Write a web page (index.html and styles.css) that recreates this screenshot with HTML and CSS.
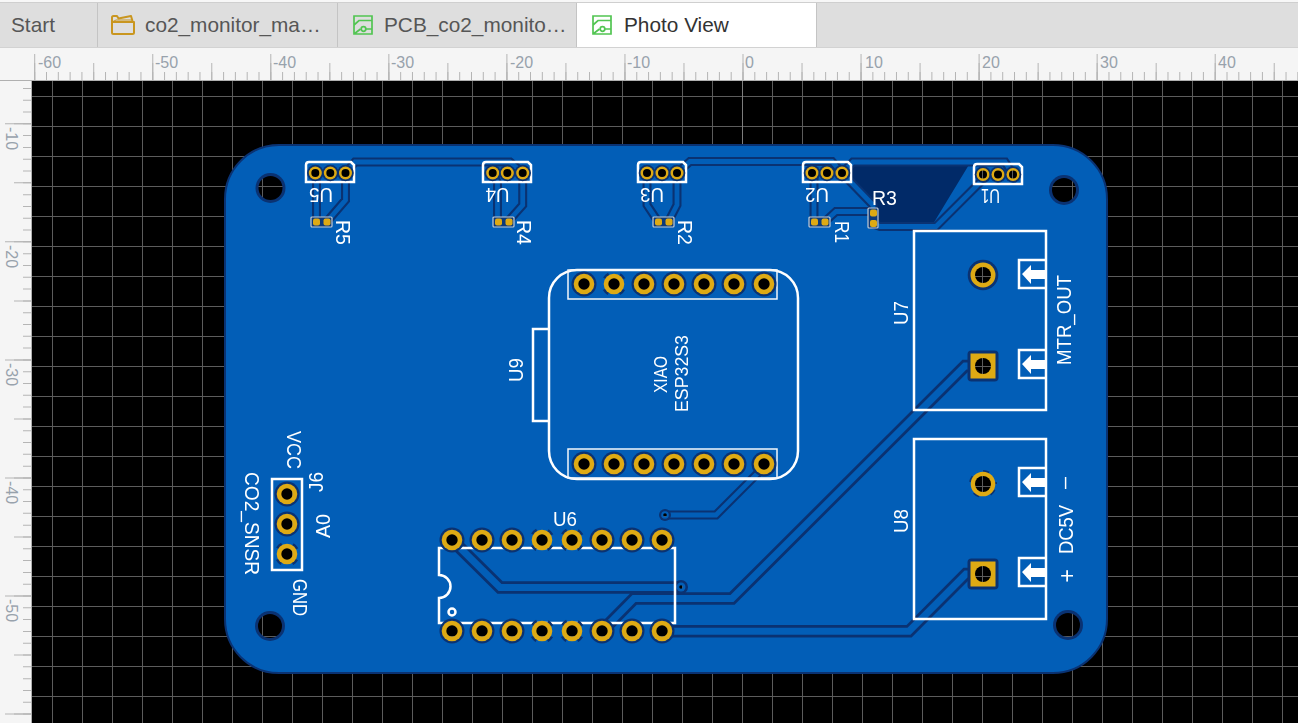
FILE: index.html
```html
<!DOCTYPE html>
<html lang="en">
<head>
<meta charset="utf-8">
<title>Photo View</title>
<link rel="stylesheet" href="styles.css">
</head>
<body>
<div class="app">
  <div class="topline"></div>
  <div class="tabs">
    <div class="tab tab-start"><span class="tab-label">Start</span></div>
    <div class="tab tab-folder">
      <svg class="icon-folder" viewBox="0 0 24 20"><path class="folder-line" d="M1 7V2.500Q1 1 2.500 1H6L7.500 3.500L20 1L21.500 6M1 7H23V17.500Q23 19 21.500 19H2.500Q1 19 1 17.500Z"/><path class="folder-line thin" d="M1 7L5 5H21"/></svg>
      <span class="tab-label">co2_monitor_ma…</span>
    </div>
    <div class="tab tab-pcb">
      <svg class="icon-pcb" viewBox="0 0 20 20"><path class="pcb-line" d="M1 1H19V19H1ZM1 10L6 5.500H19M1 19L7.500 14M13 14H19"/><circle class="pcb-line" cx="10.500" cy="14" r="2.300"/></svg>
      <span class="tab-label">PCB_co2_monito…</span>
    </div>
    <div class="tab tab-active">
      <svg class="icon-pcb" viewBox="0 0 20 20"><path class="pcb-line" d="M1 1H19V19H1ZM1 10L6 5.500H19M1 19L7.500 14M13 14H19"/><circle class="pcb-line" cx="10.500" cy="14" r="2.300"/></svg>
      <span class="tab-label">Photo View</span>
    </div>
  </div>

  <div class="ruler-row">
    <div class="ruler-corner"></div>
    <svg class="ruler-top" width="1266" height="33" viewBox="32 48 1266 33">
      <line class="tick" x1="34.200" y1="76" x2="1298" y2="76" stroke-width="8" stroke-dasharray="1 10.805"/>
      <line class="tick" x1="34.200" y1="71.500" x2="1298" y2="71.500" stroke-width="17" stroke-dasharray="1 58.025"/>
      <line class="tick" x1="34.200" y1="67" x2="1298" y2="67" stroke-width="26" stroke-dasharray="1 117.050"/>
      <line class="ruler-edge" x1="32" y1="80.500" x2="1298" y2="80.500"/>
      <text class="rl" x="38" y="68">-60</text>
      <text class="rl" x="155" y="68">-50</text>
      <text class="rl" x="273" y="68">-40</text>
      <text class="rl" x="391" y="68">-30</text>
      <text class="rl" x="510" y="68">-20</text>
      <text class="rl" x="627" y="68">-10</text>
      <text class="rl" x="745" y="68">0</text>
      <text class="rl" x="865" y="68">10</text>
      <text class="rl" x="982" y="68">20</text>
      <text class="rl" x="1100" y="68">30</text>
      <text class="rl" x="1218" y="68">40</text>
    </svg>
  </div>

  <div class="work-row">
    <svg class="ruler-left" width="32" height="642" viewBox="0 81 32 642">
      <line class="tick" x1="27" y1="5.250" x2="27" y2="723" stroke-width="8" stroke-dasharray="1 10.805"/>
      <line class="tick" x1="22.500" y1="5.250" x2="22.500" y2="723" stroke-width="17" stroke-dasharray="1 58.025"/>
      <line class="tick" x1="18" y1="5.250" x2="18" y2="723" stroke-width="26" stroke-dasharray="1 117.050"/>
      <line class="ruler-edge" x1="31.500" y1="81" x2="31.500" y2="723"/>
      <text class="rl" transform="translate(6 127) rotate(90)">-10</text>
      <text class="rl" transform="translate(6 245) rotate(90)">-20</text>
      <text class="rl" transform="translate(6 363) rotate(90)">-30</text>
      <text class="rl" transform="translate(6 481) rotate(90)">-40</text>
      <text class="rl" transform="translate(6 599) rotate(90)">-50</text>
    </svg>

    <svg class="canvas" width="1266" height="642" viewBox="32 81 1266 642">
      <defs>
        <pattern id="grid" patternUnits="userSpaceOnUse" x="52" y="96" width="30" height="30">
          <path class="grid-line" d="M0.500 0V30M0 0.500H30"/>
        </pattern>

        <circle id="pad-l" class="gold" r="10.300"/>
        <g id="pad-n"><circle class="dk" r="12.500"/><use href="#pad-l"/></g>
        <g id="pad-t"><circle class="thermal" r="11.200"/><use href="#pad-l"/></g>
        <g id="pad-s"><circle class="dk" r="8.300"/><circle class="gold" r="6.500"/></g>
        <g id="pad-sq"><rect class="dk" x="-15.500" y="-15.500" width="31" height="31" rx="4"/><rect class="gold" x="-12.500" y="-12.500" width="25" height="25"/></g>
        <path id="hdr" class="silk" d="M1 21V4Q1 1 4 1H46L49 4V21Z"/>
        <g id="res">
          <rect class="res-box" x="0" y="0" width="21" height="10" rx="1"/>
          <rect class="gold" x="2" y="1.500" width="7" height="7" rx="2"/>
          <rect class="gold" x="12.500" y="1.500" width="7" height="7" rx="2"/>
        </g>
        <g id="arrow">
          <path class="silk" d="M27 0H0V28H27"/>
          <path class="silk-fill" d="M3 14L12 5V10H27V19H12V24Z"/>
        </g>

        <path id="trace-thin" d="M345.500 173L355 162H510L522.700 173M345.500 173V200L327 221.500M315.300 173L316.500 183V221.500M492.700 173L497.500 183V221.500M522.700 173V205L508 221.500M647 173V205L658 221.500M677 173V205L668.500 221.500M677 173L690 161.500H832L842 173M842 173L853 162H1005L1013 174.500M842 173L873 205V213M814 173V221.500M825 221.500L836 211.500H873M873.500 224L880 226.500H936L985 177.500M665 515H716L764 467"/>
        <path id="trace-wide" d="M452 540L500 587.500H681M602 631L634 598.500H732L965 366H984M662 631.300H909L966 574H984"/>

        <mask id="holes" maskUnits="userSpaceOnUse" x="32" y="81" width="1266" height="642">
          <rect x="32" y="81" width="1266" height="642" fill="#fff"/>
          <circle cx="270.500" cy="188" r="12"/><circle cx="1064" cy="190" r="12"/><circle cx="270" cy="626" r="12"/><circle cx="1068" cy="625" r="12"/>
          <circle cx="983" cy="275" r="8"/><circle cx="983" cy="366" r="8"/><circle cx="983" cy="484" r="8"/><circle cx="983" cy="574" r="8"/>
          <circle cx="584" cy="284" r="5.700"/><circle cx="614" cy="284" r="5.700"/><circle cx="644" cy="284" r="5.700"/><circle cx="674" cy="284" r="5.700"/><circle cx="704" cy="284" r="5.700"/><circle cx="734" cy="284" r="5.700"/><circle cx="764" cy="284" r="5.700"/>
          <circle cx="584" cy="464" r="5.700"/><circle cx="614" cy="464" r="5.700"/><circle cx="644" cy="464" r="5.700"/><circle cx="674" cy="464" r="5.700"/><circle cx="704" cy="464" r="5.700"/><circle cx="734" cy="464" r="5.700"/><circle cx="764" cy="464" r="5.700"/>
          <circle cx="452" cy="540" r="5.700"/><circle cx="482" cy="540" r="5.700"/><circle cx="512" cy="540" r="5.700"/><circle cx="542" cy="540" r="5.700"/><circle cx="572" cy="540" r="5.700"/><circle cx="602" cy="540" r="5.700"/><circle cx="632" cy="540" r="5.700"/><circle cx="662" cy="540" r="5.700"/>
          <circle cx="452" cy="631" r="5.700"/><circle cx="482" cy="631" r="5.700"/><circle cx="512" cy="631" r="5.700"/><circle cx="542" cy="631" r="5.700"/><circle cx="572" cy="631" r="5.700"/><circle cx="602" cy="631" r="5.700"/><circle cx="632" cy="631" r="5.700"/><circle cx="662" cy="631" r="5.700"/>
          <circle cx="287" cy="494" r="5.700"/><circle cx="287" cy="524" r="5.700"/><circle cx="287" cy="554" r="5.700"/>
          <circle cx="315.300" cy="173" r="4"/><circle cx="330.300" cy="173" r="4"/><circle cx="345.500" cy="173" r="4"/>
          <circle cx="492.700" cy="173" r="4"/><circle cx="507.300" cy="173" r="4"/><circle cx="522.700" cy="173" r="4"/>
          <circle cx="647" cy="173" r="4"/><circle cx="662" cy="173" r="4"/><circle cx="677" cy="173" r="4"/>
          <circle cx="812" cy="173" r="4"/><circle cx="827" cy="173" r="4"/><circle cx="842" cy="173" r="4"/>
          <circle cx="983" cy="174.500" r="4"/><circle cx="998" cy="174.500" r="4"/><circle cx="1013" cy="174.500" r="4"/>
          <circle cx="681" cy="587" r="1.800"/><circle cx="665" cy="515" r="1.800"/>
        </mask>
      </defs>

      <rect class="space" x="32" y="81" width="1266" height="642"/>
      <rect x="32" y="81" width="1266" height="642" fill="url(#grid)"/>
      <line class="axis" x1="742.500" y1="81" x2="742.500" y2="144"/>

      <g mask="url(#holes)">
        <rect class="board" x="225" y="145" width="882" height="528" rx="54"/>

        <circle class="dk" cx="270.500" cy="188" r="15"/>
        <circle class="dk" cx="1064" cy="190" r="15"/>
        <circle class="dk" cx="270" cy="626" r="15"/>
        <circle class="dk" cx="1068" cy="625" r="15"/>

        <path class="pour" d="M850 163H970L933 224H878V208L850 180Z"/>

        <use class="tr-out-thin" href="#trace-thin"/>
        <use class="tr-out-wide" href="#trace-wide"/>
        <use class="tr-in-thin" href="#trace-thin"/>
        <use class="tr-in-wide" href="#trace-wide"/>

        <circle class="dk" cx="681" cy="587" r="7"/><circle class="cu" cx="681" cy="587" r="4.500"/>
        <circle class="dk" cx="665" cy="515" r="6"/><circle class="cu" cx="665" cy="515" r="3.800"/>

        <!-- silkscreen -->
        <use href="#hdr" x="305" y="161"/>
        <use href="#hdr" x="482" y="161"/>
        <use href="#hdr" x="637" y="161"/>
        <use href="#hdr" x="802" y="161"/>
        <use href="#hdr" x="973" y="163"/>

        <rect class="silk" x="914" y="231" width="132" height="179"/>
        <rect class="silk" x="914" y="439" width="132" height="180"/>
        <use href="#arrow" x="1019" y="260"/>
        <use href="#arrow" x="1019" y="350"/>
        <use href="#arrow" x="1019" y="468"/>
        <use href="#arrow" x="1019" y="558"/>

        <rect class="silk" x="549" y="270" width="249" height="209" rx="28"/>
        <path class="silk" d="M548 329H533V421H548"/>
        <rect class="silk-thin" x="568" y="270" width="209" height="29"/>
        <rect class="silk-thin" x="568" y="449" width="209" height="29"/>

        <rect class="silk" x="272" y="479" width="30" height="91"/>

        <path class="silk" d="M439 548H675V623H439V598A11.500 11.500 0 0 0 439 575Z"/>
        <circle class="silk" cx="452" cy="612" r="3.500"/>

        <!-- small components -->
        <use href="#res" x="311" y="217"/>
        <use href="#res" x="493" y="217"/>
        <use href="#res" x="653" y="217"/>
        <use href="#res" x="809" y="217"/>
        <rect class="res-box" x="868" y="208" width="10" height="20" rx="1"/>
        <rect class="gold" x="870" y="209.500" width="7" height="7" rx="2"/>
        <rect class="gold" x="870" y="220" width="7" height="7" rx="2"/>

        <!-- pads -->
        <use href="#pad-s" x="315.300" y="173"/><use href="#pad-s" x="330.300" y="173"/><use href="#pad-s" x="345.500" y="173"/>
        <use href="#pad-s" x="492.700" y="173"/><use href="#pad-s" x="507.300" y="173"/><use href="#pad-s" x="522.700" y="173"/>
        <use href="#pad-s" x="647" y="173"/><use href="#pad-s" x="662" y="173"/><use href="#pad-s" x="677" y="173"/>
        <use href="#pad-s" x="812" y="173"/><use href="#pad-s" x="827" y="173"/><use href="#pad-s" x="842" y="173"/>
        <use href="#pad-s" x="983" y="174.500"/><use href="#pad-s" x="998" y="174.500"/><use href="#pad-s" x="1013" y="174.500"/>

        <use href="#pad-n" x="584" y="284"/><use href="#pad-t" x="614" y="284"/><use href="#pad-n" x="644" y="284"/><use href="#pad-n" x="674" y="284"/><use href="#pad-n" x="704" y="284"/><use href="#pad-n" x="734" y="284"/><use href="#pad-n" x="764" y="284"/>
        <use href="#pad-n" x="584" y="464"/><use href="#pad-n" x="614" y="464"/><use href="#pad-n" x="644" y="464"/><use href="#pad-n" x="674" y="464"/><use href="#pad-n" x="704" y="464"/><use href="#pad-n" x="734" y="464"/><use href="#pad-n" x="764" y="464"/>

        <use href="#pad-n" x="452" y="540"/><use href="#pad-n" x="482" y="540"/><use href="#pad-n" x="512" y="540"/><use href="#pad-t" x="542" y="540"/><use href="#pad-t" x="572" y="540"/><use href="#pad-n" x="602" y="540"/><use href="#pad-n" x="632" y="540"/><use href="#pad-n" x="662" y="540"/>
        <use href="#pad-n" x="452" y="631"/><use href="#pad-n" x="482" y="631"/><use href="#pad-n" x="512" y="631"/><use href="#pad-t" x="542" y="631"/><use href="#pad-t" x="572" y="631"/><use href="#pad-n" x="602" y="631"/><use href="#pad-n" x="632" y="631"/><use href="#pad-n" x="662" y="631"/>

        <use href="#pad-n" x="287" y="494"/><use href="#pad-n" x="287" y="524"/><use href="#pad-t" x="287" y="554"/>

        <circle class="dk" cx="983" cy="275" r="15.300"/><circle class="gold" cx="983" cy="275" r="12.500"/>
        <use href="#pad-sq" x="983" y="366"/>
        <circle class="thermal" cx="983" cy="484" r="12.500"/><circle class="gold" cx="983" cy="484" r="12.300"/>
        <use href="#pad-sq" x="983" y="574"/>

        <!-- labels -->
        <text class="lbl" transform="translate(333 188) rotate(180)" textLength="24" lengthAdjust="spacingAndGlyphs">U5</text>
        <text class="lbl" transform="translate(509.500 188) rotate(180)" textLength="24" lengthAdjust="spacingAndGlyphs">U4</text>
        <text class="lbl" transform="translate(664 188) rotate(180)" textLength="24" lengthAdjust="spacingAndGlyphs">U3</text>
        <text class="lbl" transform="translate(829 188) rotate(180)" textLength="24" lengthAdjust="spacingAndGlyphs">U2</text>
        <text class="lbl" transform="translate(1000 188.500) rotate(180)" textLength="19" lengthAdjust="spacingAndGlyphs">U1</text>
        <text class="lbl" transform="translate(336 220) rotate(90)" textLength="25" lengthAdjust="spacingAndGlyphs">R5</text>
        <text class="lbl" transform="translate(517 220) rotate(90)" textLength="25" lengthAdjust="spacingAndGlyphs">R4</text>
        <text class="lbl" transform="translate(677.500 220) rotate(90)" textLength="25" lengthAdjust="spacingAndGlyphs">R2</text>
        <text class="lbl" transform="translate(835 221) rotate(90)" textLength="22" lengthAdjust="spacingAndGlyphs">R1</text>
        <text class="lbl" x="872" y="205" textLength="25" lengthAdjust="spacingAndGlyphs">R3</text>
        <text class="lbl" x="553" y="526" textLength="24" lengthAdjust="spacingAndGlyphs">U6</text>
        <text class="lbl" transform="translate(523 382) rotate(-90)" textLength="24" lengthAdjust="spacingAndGlyphs">U9</text>
        <text class="lbl lbl-small" transform="translate(667 393) rotate(-90)" textLength="37" lengthAdjust="spacingAndGlyphs">XIAO</text>
        <text class="lbl lbl-small" transform="translate(688 412) rotate(-90)" textLength="77" lengthAdjust="spacingAndGlyphs">ESP32S3</text>
        <text class="lbl" transform="translate(908 325) rotate(-90)" textLength="24" lengthAdjust="spacingAndGlyphs">U7</text>
        <text class="lbl" transform="translate(908 533) rotate(-90)" textLength="24" lengthAdjust="spacingAndGlyphs">U8</text>
        <text class="lbl" transform="translate(1071 365) rotate(-90)" textLength="90" lengthAdjust="spacingAndGlyphs">MTR_OUT</text>
        <text class="lbl" transform="translate(1073 554) rotate(-90)" textLength="49" lengthAdjust="spacingAndGlyphs">DC5V</text>
        <text class="lbl lbl-plus" transform="translate(1075 582.500) rotate(-90)">+</text>
        <text class="lbl" transform="translate(1071 489) rotate(-90)" textLength="12" lengthAdjust="spacingAndGlyphs">–</text>
        <text class="lbl" transform="translate(323 492) rotate(-90)" textLength="20" lengthAdjust="spacingAndGlyphs">J6</text>
        <text class="lbl" transform="translate(330 538) rotate(-90)" textLength="24" lengthAdjust="spacingAndGlyphs">A0</text>
        <text class="lbl" transform="translate(287 431) rotate(90)" textLength="38" lengthAdjust="spacingAndGlyphs">VCC</text>
        <text class="lbl" transform="translate(293 579) rotate(90)" textLength="37" lengthAdjust="spacingAndGlyphs">GND</text>
        <text class="lbl" transform="translate(245 472) rotate(90)" textLength="103" lengthAdjust="spacingAndGlyphs">CO2_SNSR</text>
      </g>
    </svg>
  </div>
</div>
</body>
</html>
```

FILE: styles.css
```css
* {
  box-sizing: border-box;
}

html,
body {
  margin: 0;
  height: 100%;
  overflow: hidden;
  background: #f5f5f5;
}

.app {
  display: flex;
  flex-direction: column;
  width: 1298px;
  height: 723px;
  font-family: "Liberation Sans", Arial, sans-serif;
  overflow: hidden;
}

/* tab strip */
.topline {
  flex: none;
  height: 3px;
  background: #f7f7f7;
  border-bottom: 1px solid #cfcfcf;
}

.tabs {
  display: flex;
  flex: none;
  height: 45px;
  background: #dedede;
  border-bottom: 1px solid #d2d2d2;
}

.tab {
  display: flex;
  align-items: center;
  flex: none;
  height: 44px;
  border-right: 1px solid #c4c4c4;
  color: #565656;
  font-size: 20.800px;
}

.tab-label {
  white-space: nowrap;
}

.tab-start {
  width: 98px;
  padding-left: 11px;
}

.tab-folder {
  width: 240px;
  padding-left: 13px;
  gap: 10px;
}

.tab-pcb {
  width: 239px;
  padding-left: 15px;
  gap: 11px;
}

.tab-active {
  width: 240px;
  padding-left: 15px;
  gap: 12px;
  background: #fff;
  color: #333;
}

.icon-folder {
  flex: none;
  width: 24px;
  height: 20px;
}

.icon-pcb {
  flex: none;
  width: 20px;
  height: 20px;
}

.folder-line {
  fill: none;
  stroke: #c9961f;
  stroke-width: 2;
  stroke-linejoin: round;
}

.folder-line.thin {
  stroke-width: 1;
}

.pcb-line {
  fill: none;
  stroke: #52c552;
  stroke-width: 1.700;
}

/* rulers */
.ruler-row {
  display: flex;
  flex: none;
  height: 33px;
  background: #f5f5f5;
}

.ruler-corner {
  flex: none;
  width: 32px;
  border-bottom: 1px solid #b0b0b0;
}

.ruler-top {
  display: block;
  flex: none;
}

.ruler-edge {
  stroke: #b0b0b0;
  stroke-width: 1;
}

.work-row {
  display: flex;
  flex: 1;
  min-height: 0;
}

.ruler-left {
  display: block;
  flex: none;
  background: #f5f5f5;
}

.tick {
  stroke: #b5b5b5;
  fill: none;
}

.rl {
  font-family: "Liberation Sans", Arial, sans-serif;
  font-size: 16px;
  fill: #98a2ac;
}

/* canvas */
.canvas {
  display: block;
  flex: none;
}

.space {
  fill: #000;
}

.grid-line {
  fill: none;
  stroke: #5c5c5c;
  stroke-width: 1;
}

.axis {
  stroke: #7d7d7d;
  stroke-width: 1;
}

.board {
  fill: #025eb7;
  stroke: #0a3272;
  stroke-width: 2;
}

.dk {
  fill: #0a3272;
}

.cu {
  fill: #025eb7;
}

.pour {
  fill: #012a68;
}

.gold {
  fill: #deaa14;
}

.thermal {
  fill: none;
  stroke: #0a3272;
  stroke-width: 3;
  stroke-dasharray: 6 11.600;
  stroke-dashoffset: -5.800;
}

.tr-out-thin,
.tr-out-wide,
.tr-in-thin,
.tr-in-wide {
  fill: none;
  stroke-linejoin: miter;
  stroke-linecap: round;
}

.tr-out-thin {
  stroke: #0a3272;
  stroke-width: 9;
}

.tr-in-thin {
  stroke: #025eb7;
  stroke-width: 4.800;
}

.tr-out-wide {
  stroke: #0a3272;
  stroke-width: 12.500;
}

.tr-in-wide {
  stroke: #025eb7;
  stroke-width: 7;
}

.silk {
  fill: none;
  stroke: #fff;
  stroke-width: 2.500;
}

.silk-thin {
  fill: none;
  stroke: #f4f7fb;
  stroke-width: 1.500;
}

.silk-fill {
  fill: #fff;
}

.res-box {
  fill: #0d3a7a;
  stroke: #c3ccd6;
  stroke-width: 1.200;
}

.lbl {
  font-family: "Liberation Sans", Arial, sans-serif;
  font-size: 20.500px;
  fill: #fff;
}

.lbl-small {
  font-size: 18px;
}

.lbl-plus {
  font-size: 23px;
}
```
